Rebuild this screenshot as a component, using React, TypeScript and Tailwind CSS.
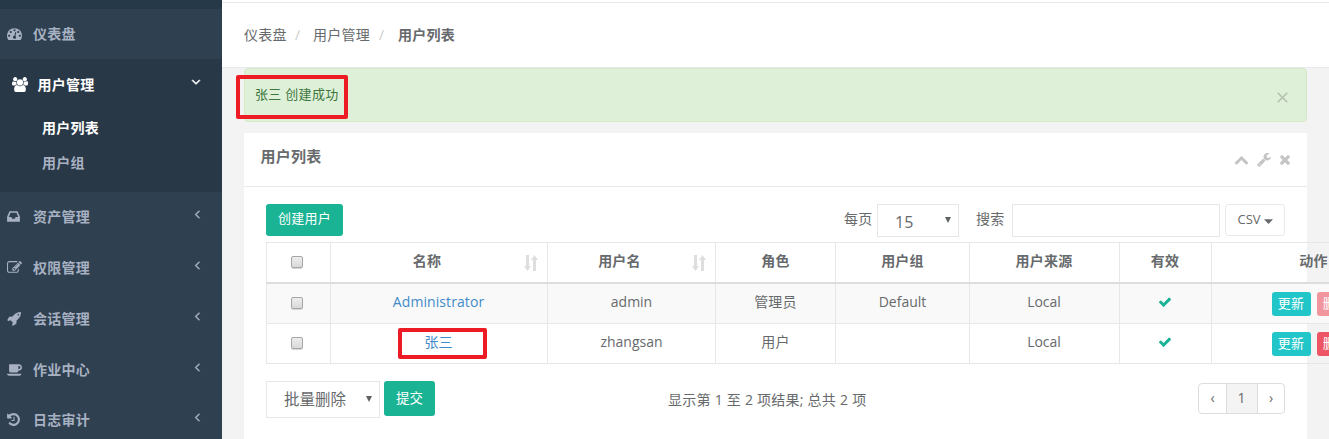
import React from "react";

type Glyph = { box: string; d: string };

const glyphs: Record<string, Glyph> = {
  dashboard: {
    box: "0 0 1792 1792",
    d: "M384 1152q0-53-37.5-90.5t-90.5-37.5-90.5 37.5-37.5 90.5 37.5 90.5 90.5 37.5 90.5-37.5 37.5-90.5zm192-448q0-53-37.5-90.5t-90.5-37.5-90.5 37.5-37.5 90.5 37.5 90.5 90.5 37.5 90.5-37.5 37.5-90.5zm428 481l101-382q6-26-7.5-48.5t-38.5-29.5-48 6.5-30 39.5l-101 382q-60 5-107 43.5t-63 98.5q-20 77 20 146t117 89 146-20 89-117q16-60-6-117t-72-91zm660-33q0-53-37.5-90.5t-90.5-37.5-90.5 37.5-37.5 90.5 37.5 90.5 90.5 37.5 90.5-37.5 37.5-90.5zm-640-640q0-53-37.5-90.5t-90.5-37.5-90.5 37.5-37.5 90.5 37.5 90.5 90.5 37.5 90.5-37.5 37.5-90.5zm448 192q0-53-37.5-90.5t-90.5-37.5-90.5 37.5-37.5 90.5 37.5 90.5 90.5 37.5 90.5-37.5 37.5-90.5zm320 448q0 261-141 483-19 29-54 29h-1402q-35 0-54-29-141-221-141-483 0-182 71-348t191-286 286-191 348-71 348 71 286 191 191 286 71 348z",
  },
  users: {
    box: "-64 0 1920 1792",
    d: "M529 896q-162 5-265 128h-134q-82 0-138-40.5t-56-118.5q0-353 124-353 6 0 43.5 21t97.5 42.5 119 21.5q67 0 133-23-5 37-5 66 0 159 81 256zm1071 637q0 120-73 189.5t-194 69.5h-874q-121 0-194-69.5t-73-189.5q0-53 3.5-103.5t14-109 26.5-108.5 43-97.5 62-81 85.5-53.5 111.5-20q10 0 43 21.5t73 48 107 48 135 21.5 135-21.5 107-48 73-48 43-21.5q61 0 111.5 20t85.5 53.5 62 81 43 97.5 26.5 108.5 14 109 3.5 103.5zm-1024-1277q0 106-75 181t-181 75-181-75-75-181 75-181 181-75 181 75 75 181zm704 384q0 159-112.5 271.5t-271.5 112.5-271.5-112.5-112.5-271.5 112.5-271.5 271.5-112.5 271.5 112.5 112.5 271.5zm576 225q0 78-56 118.5t-138 40.5h-134q-103-123-265-128 92-135 92-291 0-29-5-66 66 23 133 23 59 0 119-21.5t97.5-42.5 43.5-21q124 0 124 353zm-128-609q0 106-75 181t-181 75-181-75-75-181 75-181 181-75 181 75 75 181z",
  },
  inbox: {
    box: "0 0 1536 1792",
    d: "M1023 960h316q-1-3-2.5-8t-2.5-8l-212-496h-708l-212 496q-1 2-2.5 8t-2.5 8h316l95 192h320zm513 30v482q0 26-19 45t-45 19h-1408q-26 0-45-19t-19-45v-482q0-62 25-123l238-552q10-25 36.5-42t52.5-17h832q26 0 52.5 17t36.5 42l238 552q25 61 25 123z",
  },
  edit: {
    box: "0 0 1792 1792",
    d: "M888 1184l116-116-152-152-116 116v56h96v96h56zm440-720q-16-16-33 1l-350 350q-17 17-1 33t33-1l350-350q17-17 1-33zm80 594v190q0 119-84.5 203.5t-203.5 84.5h-832q-119 0-203.5-84.5t-84.5-203.5v-832q0-119 84.5-203.5t203.5-84.5h832q63 0 117 25 15 7 18 23 3 17-9 29l-49 49q-14 14-32 8-23-6-45-6h-832q-66 0-113 47t-47 113v832q0 66 47 113t113 47h832q66 0 113-47t47-113v-126q0-13 9-22l64-64q15-15 35-7t20 29zm-96-738l288 288-672 672h-288v-288zm444 132l-92 92-288-288 92-92q28-28 68-28t68 28l152 152q28 28 28 68t-28 68z",
  },
  rocket: {
    box: "0 0 1664 1792",
    d: "M1440 448q0-40-28-68t-68-28-68 28-28 68 28 68 68 28 68-28 28-68zm224-288q0 249-75.5 430.5t-253.5 360.5q-81 80-195 176l-20 379q-2 16-16 26l-384 224q-7 4-16 4-12 0-23-9l-64-64q-13-14-8-32l85-276-281-281-276 85q-3 1-9 1-14 0-23-9l-64-64q-17-19-5-39l224-384q10-14 26-16l379-20q96-114 176-195 188-187 358-258t431-71q14 0 24 9.5t10 22.5z",
  },
  coffee: {
    box: "0 0 1856 1792",
    d: "M1664 640q0-80-56-136t-136-56h-64v384h64q80 0 136-56t56-136zm-1664 768h1792q0 106-75 181t-181 75h-1280q-106 0-181-75t-75-181zm1856-768q0 159-112.5 271.5t-271.5 112.5h-64v32q0 92-66 158t-158 66h-704q-92 0-158-66t-66-158v-736q0-26 19-45t45-19h1152q159 0 271.5 112.5t112.5 271.5z",
  },
  history: {
    box: "0 0 1536 1792",
    d: "M1536 896q0 156-61 298t-164 245-245 164-298 61q-172 0-327-72.5t-264-204.5q-7-10-6.5-22.5t8.5-20.5l137-138q10-9 25-9 16 2 23 12 73 95 179 147t225 52q104 0 198.5-40.5t163.5-109.5 109.5-163.5 40.5-198.5-40.5-198.5-109.5-163.5-163.5-109.5-198.5-40.5q-98 0-188 35.5t-160 101.5l137 138q31 30 14 69-17 40-59 40h-448q-26 0-45-19t-19-45v-448q0-42 40-59 39-17 69 14l130 129q107-101 244.5-156.5t284.5-55.5q156 0 298 61t245 164 164 245 61 298zm-640-288v448q0 14-9 23t-23 9h-320q-14 0-23-9t-9-23v-64q0-14 9-23t23-9h224v-352q0-14 9-23t23-9h64q14 0 23 9t9 23z",
  },
  angleLeft: {
    box: "480 0 896 1792",
    d: "M1203 544q0 13-10 23l-393 393 393 393q10 10 10 23t-10 23l-50 50q-10 10-23 10t-23-10l-466-466q-10-10-10-23t10-23l466-466q10-10 23-10t23 10l50 50q10 10 10 23z",
  },
  chevronUp: {
    box: "0 0 1792 1792",
    d: "M1683 1331l-166 165q-19 19-45 19t-45-19l-531-531-531 531q-19 19-45 19t-45-19l-166-165q-19-19-19-45.5t19-45.5l742-741q19-19 45-19t45 19l742 741q19 19 19 45.5t-19 45.5z",
  },
  wrench: {
    box: "64 0 1664 1792",
    d: "M448 1472q0-26-19-45t-45-19-45 19-19 45 19 45 45 19 45-19 19-45zm644-420l-682 682q-37 37-90 37-52 0-91-37l-106-108q-38-36-38-90 0-53 38-91l681-681q39 98 114.5 173.5t173.5 114.5zm634-435q0 39-23 106-47 134-164.5 217.5t-258.5 83.5q-185 0-316.5-131.5t-131.5-316.5 131.5-316.5 316.5-131.5q58 0 121.5 16.5t107.5 46.5q16 11 16 28t-16 28l-293 169v224l193 107q5-3 79-48.5t135.5-81 70.5-35.5q15 0 23.5 10t8.5 25z",
  },
  times: {
    box: "192 0 1408 1792",
    d: "M1490 1322q0 40-28 68l-136 136q-28 28-68 28t-68-28l-294-294-294 294q-28 28-68 28t-68-28l-136-136q-28-28-28-68t28-68l294-294-294-294q-28-28-28-68t28-68l136-136q28-28 68-28t68 28l294 294 294-294q28-28 68-28t68 28l136 136q28 28 28 68t-28 68l-294 294 294 294q28 28 28 68z",
  },
  check: {
    box: "0 0 1792 1792",
    d: "M1671 566q0 40-28 68l-724 724-136 136q-28 28-68 28t-68-28l-136-136-362-362q-28-28-28-68t28-68l136-136q28-28 68-28t68 28l294 295 656-657q28-28 68-28t68 28l136 136q28 28 28 68z",
  },
};

function Icon({ name, className }: { name: string; className: string }) {
  const g = glyphs[name];
  return (
    <svg viewBox={g.box} className={`shrink-0 fill-current ${className}`} aria-hidden="true">
      <path d={g.d} />
    </svg>
  );
}

function MenuItem({ icon, label, size, arrow = true, height = "h-[51px]" }: {
  icon: string; label: string; size: string; arrow?: boolean; height?: string;
}) {
  return (
    <a className={`flex items-center pr-[21px] pb-[2px] pl-[7px] ${height}`}>
      <span className="flex w-[26px]"><Icon name={icon} className={size} /></span>
      <span className="flex-1">{label}</span>
      {arrow && <Icon name="angleLeft" className="mb-[6px] h-[14px] w-[7px] stroke-current stroke-[60]" />}
    </a>
  );
}

function SortIcon() {
  return (
    <svg viewBox="0 0 14 16" className="absolute top-[12px] right-[9px] h-4 w-[14px] fill-[#dedede]" aria-hidden="true">
      <path d="M2 0h3v11h2l-3.5 5L0 11h2zM9 16h3V5h2L10.500 0 7 5h2z" />
    </svg>
  );
}

function Checkbox() {
  return (
    <span className="mt-[2px] h-3 w-3 rounded-[2px] border border-[#a6a6a6] bg-linear-to-b from-[#ededed] to-[#d9d9d9] shadow-[0_1px_0_#d6d6d6]" />
  );
}

function Cell({ children, className = "" }: { children?: React.ReactNode; className?: string }) {
  return (
    <div className={`relative flex justify-center border-r border-[#e7e7e7] pt-[8px] leading-5 ${className}`}>
      {children}
    </div>
  );
}

const columns = "grid w-[1152px] grid-cols-[65px_217px_168px_120px_134px_150px_92px_206px]";

function Row({ name, user, role, group, muted, className, marked }: {
  name: string; user: string; role: string; group?: string; muted?: boolean; className: string; marked?: boolean;
}) {
  return (
    <div className={`${columns} border-b border-[#e7e7e7] ${className}`}>
      <Cell className="border-l pt-[11px] pr-[3px]"><Checkbox /></Cell>
      <Cell className="pr-px text-[#428bca]">
        <span className="tracking-[0.080px]">{name}</span>
        {marked && <span className="absolute top-[4px] left-[67px] h-[31px] w-[89px] rounded-[2px] border-4 border-[#ed1c24]" />}
      </Cell>
      <Cell>{user}</Cell>
      <Cell className="tracking-[0.25px]">{role}</Cell>
      <Cell>{group}</Cell>
      <Cell className="pr-px">Local</Cell>
      <Cell className="pr-[2px]"><Icon name="check" className="mt-[3px] h-[14px] w-[14px] text-[#1ab394]" /></Cell>
      <Cell className="gap-[6px] pr-[2px] text-[13px] tracking-[0.25px] text-white">
        <span className="h-6 w-[39px] rounded-[3px] bg-[#23c6c8] text-center leading-[23px]">更新</span>
        <span className={`h-6 w-[39px] rounded-[3px] bg-[#ed5565] text-center leading-[23px] ${muted ? "opacity-60" : ""}`}>删除</span>
      </Cell>
    </div>
  );
}

function SelectArrow() {
  return <svg viewBox="0 0 6 6" className="mb-px h-[6px] w-[6px] fill-[#606366]"><path d="M0 0h6L3 6z" /></svg>;
}

export default function App() {
  return (
    <div className="flex h-[439px] w-[1329px] overflow-hidden bg-[#f3f3f3] font-['Open_Sans','Noto_Sans_CJK_SC',sans-serif] text-[14px] text-[#676a6c]">
      <nav className="w-[222px] shrink-0 bg-[#2f4050] font-semibold tracking-[0.25px] text-[#a7b1c2]">
        <div className="h-[9px] bg-[#263949]" />
        <MenuItem icon="dashboard" label="仪表盘" size="h-[15px] w-[15px]" arrow={false} height="h-[50px]" />
        <div className="h-[133px] bg-[#293846]">
          <a className="flex h-[51px] items-center pr-[22px] pl-[12px] text-white">
            <span className="flex w-[25.500px]"><Icon name="users" className="h-[15px] w-[16px]" /></span>
            <span className="flex-1">用户管理</span>
            <Icon name="angleLeft" className="mr-[1px] mb-[5px] h-[14px] w-[7px] -rotate-90 stroke-current stroke-[80]" />
          </a>
          <a className="flex h-[35px] items-center pl-[42px] text-white">用户列表</a>
          <a className="flex h-[35px] items-center pl-[42px]">用户组</a>
        </div>
        <MenuItem icon="inbox" label="资产管理" size="h-[15px] w-[13px]" />
        <MenuItem icon="edit" label="权限管理" size="h-[15px] w-[15px]" />
        <MenuItem icon="rocket" label="会话管理" size="h-[15px] w-[14px]" />
        <MenuItem icon="coffee" label="作业中心" size="h-[15px] w-[15px]" />
        <MenuItem icon="history" label="日志审计" size="h-[15px] w-[13px]" height="h-[49px]" />
      </nav>

      <main className="w-[1107px] shrink-0">
        <div className="h-[3px] border-b border-[#e7eaec] bg-white" />
        <header className="flex h-[65px] items-center border-b border-[#e7eaec] bg-white pb-px pl-[22px] tracking-[0.25px] whitespace-nowrap">
          <span className="w-[42px]">仪表盘</span>
          <span className="w-[27px] pl-[9px] text-[#ccc]">/</span>
          <span className="w-[56px]">用户管理</span>
          <span className="w-[29px] pl-[10px] text-[#ccc]">/</span>
          <strong className="font-semibold">用户列表</strong>
        </header>

        <div className="relative ml-[22px] flex h-[54px] w-[1063px] items-center justify-between rounded-[4px] border border-[#d6e9c6] bg-[#dff0d8] pr-[18px] pl-[10px] text-[13px] text-[#3c763d]">
          <span className="tracking-[0.300px]">张三 创建成功</span>
          <svg viewBox="0 0 11 11" className="mt-[5px] h-[11px] w-[11px] fill-none stroke-[#b2c0ad] stroke-[1.500]"><path d="M.7.7l9.600 9.600M10.300.7L.7 10.300" /></svg>
          <span className="absolute top-[6px] left-[-9px] h-[44px] w-[112px] rounded-[2px] border-4 border-[#ed1c24]" />
        </div>

        <section className="mt-[11px] ml-[22px] h-[306px] w-[1063px] bg-white">
          <div className="flex h-[54px] items-center border-b border-[#e7eaec] pr-[16px] pb-[6px] pl-[16.500px]">
            <h5 className="flex-1 text-[15px] font-semibold tracking-[0.25px]">用户列表</h5>
            <div className="mt-[5px] flex items-center text-[#c4c4c4]">
              <Icon name="chevronUp" className="h-[15px] w-[15px]" />
              <Icon name="wrench" className="ml-[8px] h-[15px] w-[14px]" />
              <Icon name="times" className="ml-[8px] h-[15px] w-[12px]" />
            </div>
          </div>

          <div className="px-[22px] pt-[17px]">
            <div className="flex h-[38px] items-start">
              <button className="h-8 w-[77px] shrink-0 rounded-[3px] bg-[#1ab394] pb-[2px] text-[13px] tracking-[0.25px] whitespace-nowrap text-white">创建用户</button>
              <span className="ml-[501px] w-[33px] leading-[30px] tracking-[0.25px]">每页</span>
              <div className="flex h-[33px] w-[82px] items-center justify-between border border-[#e5e6e7] pr-[7px] pl-[17px] text-[16px]">
                <span className="pt-[3px]">15</span>
                <SelectArrow />
              </div>
              <span className="ml-[17px] w-[36px] leading-[30px] tracking-[0.25px]">搜索</span>
              <div className="h-[33px] w-[208px] border border-[#e5e6e7]" />
              <button className="ml-[5px] flex h-8 w-[60px] items-center justify-center gap-[3px] rounded-[3px] border border-[#e7eaec] text-[13px]">
                <span className="pb-px">CSV</span>
                <svg viewBox="0 0 9 5" className="mt-[2px] h-[5px] w-[9px] fill-current"><path d="M0 .3h9L4.500 5z" /></svg>
              </button>
            </div>

            <div>
              <div className={`${columns} h-[42px] border-t border-b-2 border-t-[#e7e7e7] border-b-[#dddddd] font-semibold tracking-[0.25px]`}>
                <Cell className="border-l pt-[11px] pr-[3px]"><Checkbox /></Cell>
                <Cell className="pr-[24px]">名称<SortIcon /></Cell>
                <Cell className="pr-[24px]">用户名<SortIcon /></Cell>
                <Cell>角色</Cell>
                <Cell>用户组</Cell>
                <Cell className="pr-px">用户来源</Cell>
                <Cell className="pr-px">有效</Cell>
                <Cell className="pr-[2px]">动作</Cell>
              </div>
              <Row className="h-[40px] bg-[#f9f9f9]" name="Administrator" user="admin" role="管理员" group="Default" muted />
              <Row className="h-[40px]" name="张三" user="zhangsan" role="用户" marked />
            </div>

            <div className="mt-[17px] flex items-start">
              <div className="flex h-[37px] w-[114px] items-center justify-between border border-[#e5e6e7] pr-[7px] pl-[17px] text-[15.500px]">
                <span>批量删除</span>
                <SelectArrow />
              </div>
              <button className="ml-[4px] h-[35px] w-[51px] rounded-[3px] bg-[#1ab394] text-[13.500px] text-white">提交</button>
              <span className="ml-[233px] w-[530px] pt-[9px] leading-5 tracking-[0.250px]">显示第 1 至 2 项结果; 总共 2 项</span>
              <div className="mt-[2px] flex h-[31px] w-[87px] overflow-hidden rounded-[4px] border border-[#dddddd] text-center leading-[28px]">
                <span className="w-[27px]">‹</span>
                <span className="w-[32px] border-x border-[#dddddd] bg-[#f4f4f4] pr-px">1</span>
                <span className="w-[26px]">›</span>
              </div>
            </div>
          </div>
        </section>
      </main>
    </div>
  );
}
